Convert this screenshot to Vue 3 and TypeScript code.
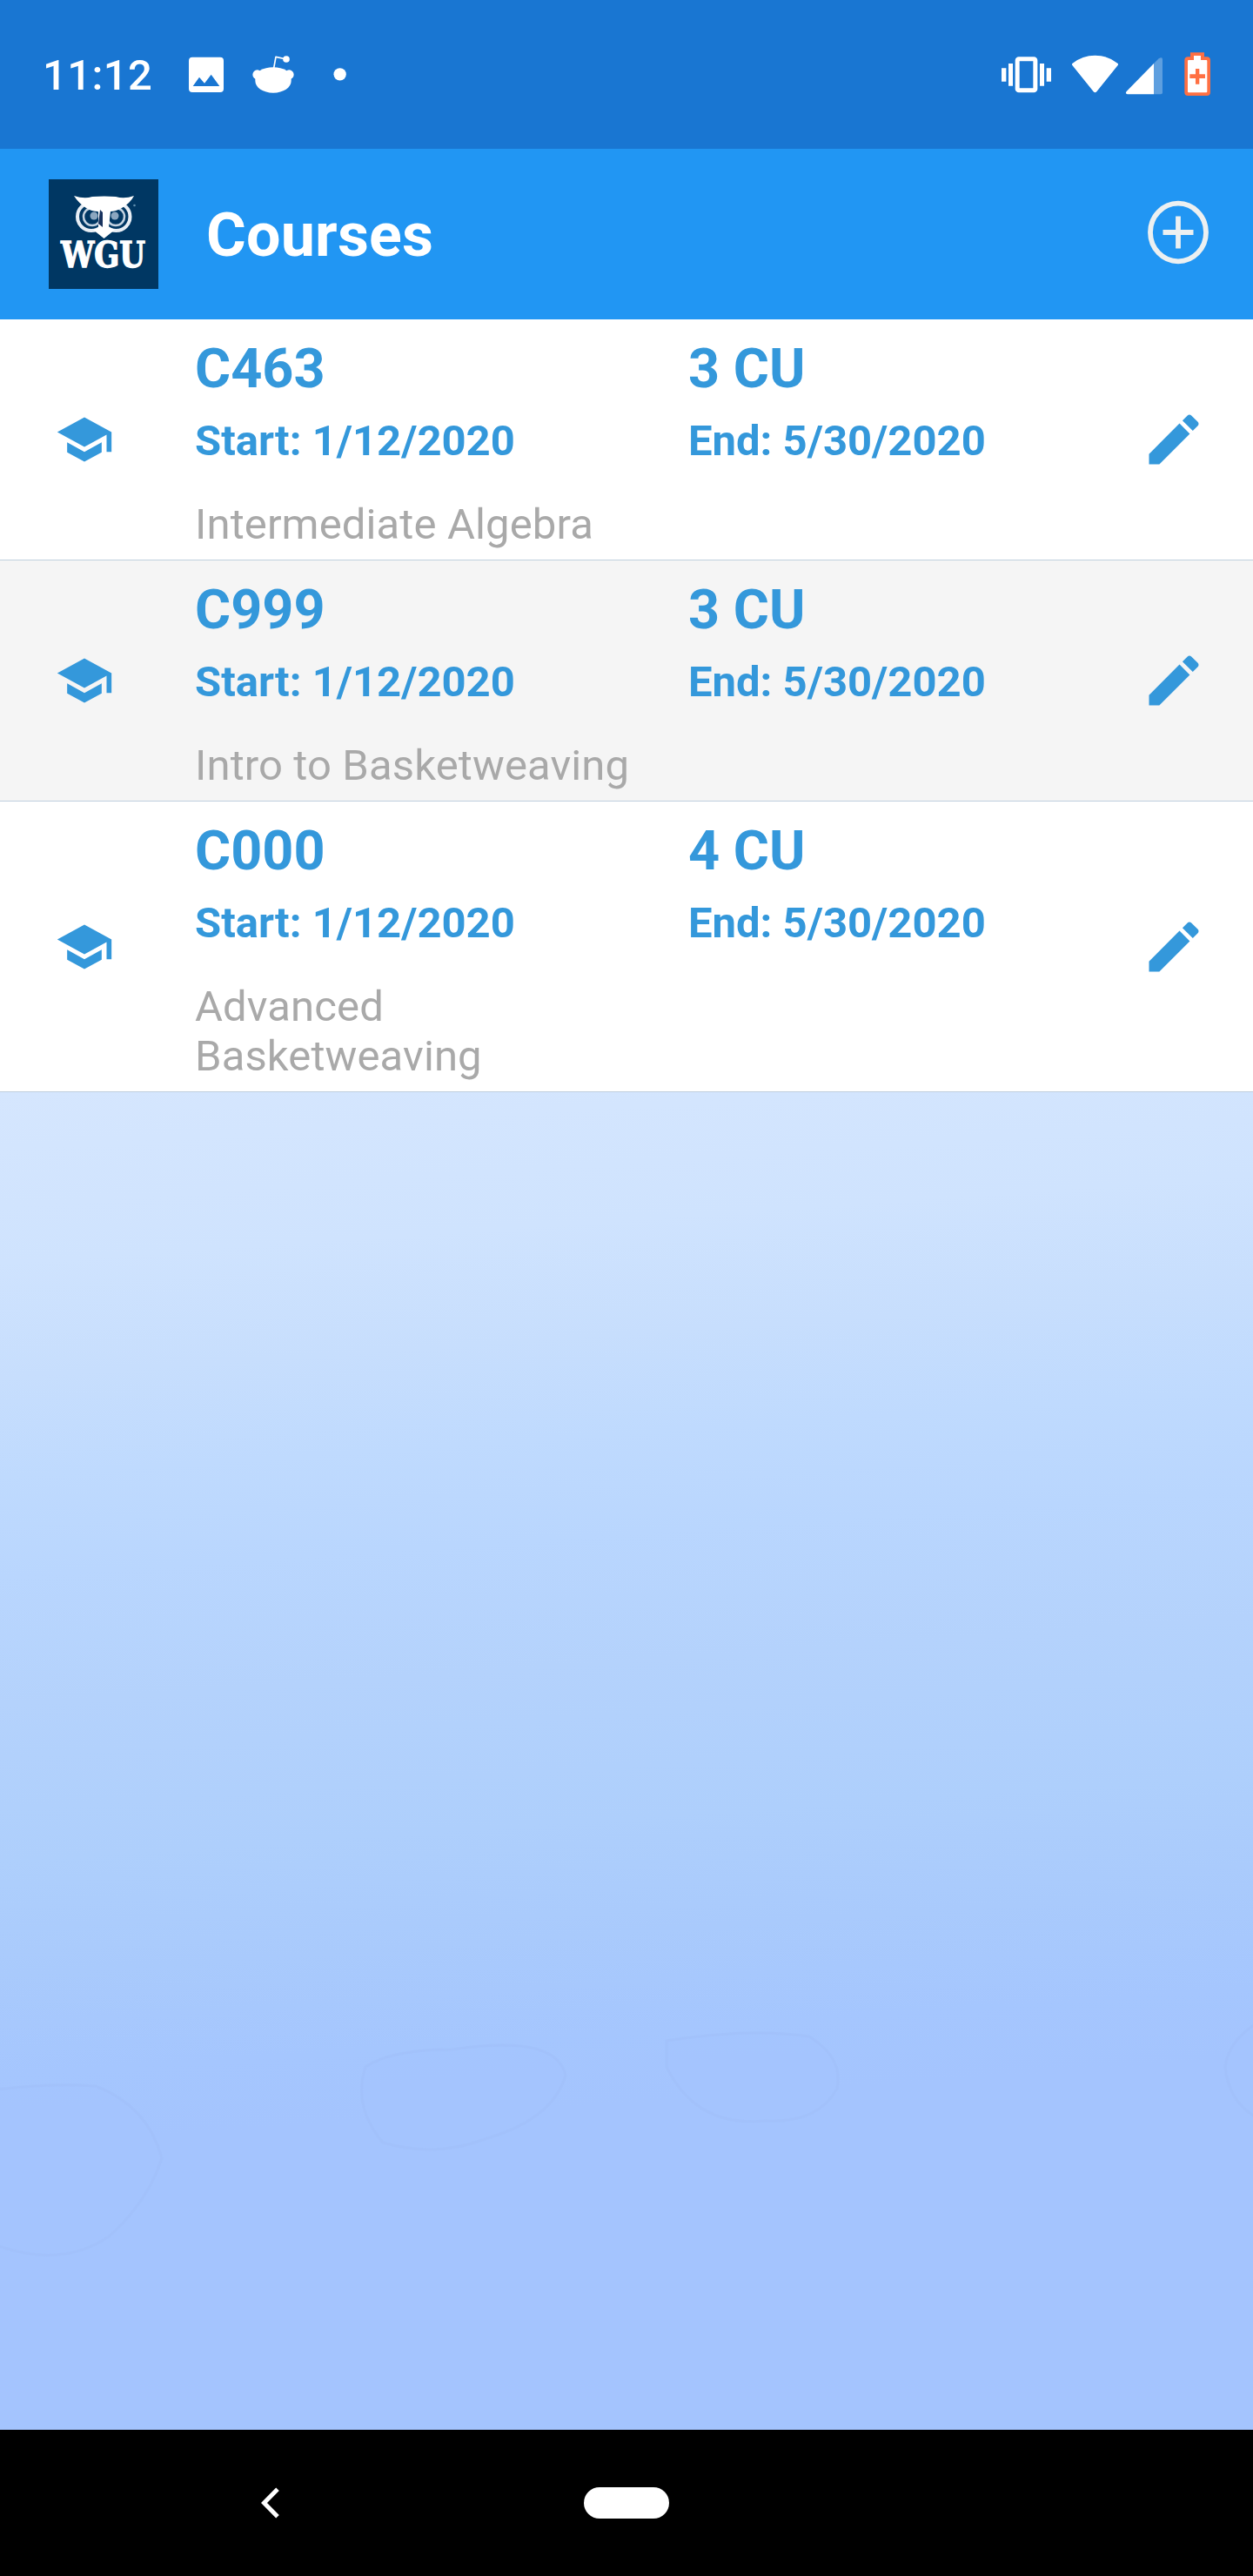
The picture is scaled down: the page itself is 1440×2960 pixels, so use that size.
<script setup lang="ts">
interface Course {
  code: string
  units: number
  start: string
  end: string
  title: string
}

const courses: Course[] = [
  { code: 'C463', units: 3, start: '1/12/2020', end: '5/30/2020', title: 'Intermediate Algebra' },
  { code: 'C999', units: 3, start: '1/12/2020', end: '5/30/2020', title: 'Intro to Basketweaving' },
  { code: 'C000', units: 4, start: '1/12/2020', end: '5/30/2020', title: 'Advanced Basketweaving' },
]
</script>

<template>
  <div class="screen">
    <div class="status-bar">
      <span class="clock">11:12</span>
      <svg class="notifications" viewBox="640 170 570 170" aria-hidden="true">
        <path
          fill-rule="evenodd"
          d="M664 196H760Q772 196 772 208V305Q772 317 760 317H664Q652 317 652 305V208Q652 196 664 196ZM666 296H758L729 256L706 286L688 265Z"
        />
        <circle cx="888" cy="256" r="16" />
        <circle cx="998" cy="256" r="16" />
        <path d="M881 268C881 246 908 231 943 231S1005 246 1005 268V278C1005 301 978 319 943 319S881 301 881 278Z" />
        <path class="antenna" d="M945 234L952 195L988 203" />
        <circle cx="988" cy="203" r="11.5" />
        <circle cx="1173" cy="255" r="21.5" />
      </svg>
      <svg class="system" viewBox="90 170 730 170" aria-hidden="true">
        <rect x="147.500" y="202.500" width="62" height="108" rx="5" class="phone" />
        <path d="M117 218h15v77h-15zM225 218h15v77h-15zM93 234h16v46h-16zM248 234h16v46h-16z" />
        <path d="M338 217Q372 190 415.500 190T493 217Q497 220 494 224L421 315Q415.500 321 410 315L337 224Q334 220 338 217Z" />
        <path d="M618 218L635 201Q648 193 648 204V318Q648 324 642 324H618Z" opacity="0.3" />
        <path d="M618 218V324H527Q518 321 524 314Z" />
        <path
          class="battery"
          d="M744 180H792V195H801Q813 195 813 207V317Q813 329 801 329H736Q724 329 724 317V207Q724 195 736 195H744Z"
        />
        <path d="M756 191H780V206H799Q802 206 802 209V315Q802 318 799 318H738Q735 318 735 315V209Q735 206 738 206H756Z" />
        <path class="battery" d="M762 236H775V255H795V269H775V289H762V269H742V255H762Z" />
      </svg>
    </div>

    <header class="app-bar">
      <svg class="logo" viewBox="0 0 126 126" role="img" aria-label="WGU">
        <rect width="126" height="126" fill="#003763" />
        <g class="owl">
          <circle cx="49" cy="43" r="16" class="ring" />
          <circle cx="77.500" cy="43" r="16" class="ring" />
          <circle cx="50" cy="43" r="10" class="ring thin" />
          <circle cx="77" cy="43" r="10" class="ring thin" />
          <circle cx="52" cy="42" r="4.500" class="iris" />
          <circle cx="76" cy="42" r="4.500" class="iris" />
          <path d="M29 19Q41 23 50 20Q64 19 77 20Q87 23 98 19Q94 27 84 33Q77 37 71 37L69 55L76 58L63.500 68L51 58L57 56L57 37Q49 37 43 33Q34 27 29 19Z" />
          <path class="shade" d="M59 35L62 38L62 55L57 51Z" />
          <circle cx="98.500" cy="30" r="1.300" fill="#5f8fae" />
        </g>
        <text x="14" y="101.200" textLength="97" lengthAdjust="spacingAndGlyphs">WGU</text>
      </svg>
      <h1>Courses</h1>
      <svg class="add" viewBox="0 0 72 76" aria-hidden="true">
        <ellipse cx="36" cy="38" rx="32" ry="33.300" />
        <path d="M36 19.500V56.500M18.500 38H53.500" />
      </svg>
    </header>

    <main class="list">
      <section v-for="course in courses" :key="course.code" class="row">
        <svg class="cap" viewBox="0 0 24 24" aria-hidden="true">
          <path d="M5 13.180v4L12 21l7-3.820v-4L12 17l-7-3.820zM12 3L1 9l11 6 9-4.910V17h2V9L12 3z" />
        </svg>
        <div class="details">
          <strong class="code">{{ course.code }}</strong>
          <strong class="date">Start: {{ course.start }}</strong>
          <span class="title">{{ course.title }}</span>
        </div>
        <div class="details secondary">
          <strong class="code">{{ course.units }} CU</strong>
          <strong class="date">End: {{ course.end }}</strong>
        </div>
        <svg class="edit" viewBox="0 0 24 24" aria-hidden="true">
          <path d="M3 17.250V21h3.750L17.810 9.940l-3.750-3.750L3 17.250zM20.710 7.040c.390-.390.390-1.020 0-1.410l-2.340-2.340c-.390-.390-1.020-.390-1.410 0l-1.830 1.830 3.750 3.750 1.830-1.830z" />
        </svg>
      </section>
    </main>

    <div class="backdrop">
      <svg viewBox="0 0 1440 1537" aria-hidden="true">
        <path d="M-4 1146Q60 1138 110 1142Q170 1165 186 1225Q170 1275 125 1315Q70 1352 -4 1325Z" />
        <path d="M420 1120Q450 1100 520 1100Q640 1082 650 1130Q635 1180 560 1202Q500 1225 440 1207Q405 1165 420 1120Z" />
        <path d="M766 1090Q860 1075 930 1085Q970 1110 962 1145Q940 1185 880 1182Q800 1190 766 1120Z" />
        <path d="M1444 1070Q1412 1090 1408 1120Q1412 1160 1444 1178Z" />
      </svg>
    </div>

    <nav class="nav-bar">
      <svg class="back" viewBox="0 0 22 36" aria-hidden="true">
        <path d="M19 2.200L3.500 18L19 33.800" />
      </svg>
      <div class="home"></div>
    </nav>
  </div>
</template>

<style>
body {
  margin: 0;
}
</style>

<style scoped>
.screen {
  display: flex;
  flex-direction: column;
  width: 1440px;
  height: 2960px;
  overflow: hidden;
  font-family: Roboto, sans-serif;
}

.status-bar {
  display: flex;
  flex: none;
  box-sizing: border-box;
  height: 171px;
  padding: 57px 47px 0 49px;
  background: #1976d2;
  color: #fff;
}

.status-bar svg {
  flex: none;
  height: 56.667px;
  fill: currentColor;
}

.clock {
  width: 164.333px;
  font-size: 49px;
  font-weight: 500;
  line-height: 60px;
  letter-spacing: 0.4px;
}

.notifications {
  width: 190px;
}

.antenna {
  fill: none;
  stroke: currentColor;
  stroke-width: 5;
  stroke-linejoin: round;
}

.system {
  width: 243.333px;
  margin-left: auto;
  margin-right: -0.333px;
}

.phone {
  fill: none;
  stroke: currentColor;
  stroke-width: 15;
}

.battery {
  fill: #ff7043;
}

.app-bar {
  display: flex;
  flex: none;
  align-items: center;
  box-sizing: border-box;
  height: 196px;
  padding: 0 50px 0 56px;
  background: #2196f3;
}

.logo {
  flex: none;
  width: 126px;
  height: 126px;
}

.logo text {
  fill: #fff;
  stroke: #fff;
  stroke-width: 1.3;
  font-family: "DejaVu Serif Condensed", "DejaVu Serif", serif;
  font-size: 41px;
  font-weight: 700;
}

.owl {
  fill: #fff;
}

.owl .ring {
  fill: #003763;
  stroke: #e8eef5;
  stroke-width: 4;
}

.owl .thin {
  stroke: #c5d4e2;
  stroke-width: 2.500;
}

.owl .iris {
  fill: #8ba6bf;
}

.owl .shade {
  fill: #17325e;
}

h1 {
  margin: 2px auto 0 55px;
  color: #fff;
  font-size: 70px;
  font-weight: 700;
  line-height: 82px;
  letter-spacing: 0.2px;
}

.add {
  width: 72px;
  height: 76px;
  margin-top: -4px;
  fill: none;
  stroke: #ecf0f1;
  stroke-width: 5.800;
}

.list {
  flex: none;
}

.row {
  display: flex;
  align-items: center;
  box-sizing: border-box;
  padding: 0 53px 0 63px;
  border-bottom: 1px solid #bfcfde;
  background: #fff;
  color: #3498db;
}

.row:nth-child(even) {
  background: #f5f5f5;
}

.cap {
  flex: none;
  width: 68px;
  height: 68px;
  fill: currentColor;
}

.details {
  display: flex;
  flex: none;
  flex-direction: column;
  align-self: stretch;
  width: 510px;
  margin-left: 93px;
  padding: 20px 0 12px;
}

.secondary {
  width: 440px;
  margin-left: 57px;
}

.code {
  font-size: 63px;
  line-height: 74px;
}

.date {
  margin-top: 17px;
  font-size: 49px;
  line-height: 58px;
}

.title {
  margin-top: 38px;
  color: #a9a9a9;
  font-size: 49px;
  line-height: 57px;
  letter-spacing: 0.12px;
}

.edit {
  flex: none;
  width: 76px;
  height: 76px;
  margin-left: auto;
  fill: currentColor;
}

.backdrop {
  flex: 1;
  min-height: 0;
  background: linear-gradient(
    176deg,
    #d5e6fe 0%,
    #cfe3fe 12%,
    #c7defd 20%,
    #bfdafe 27%,
    #b9d6fe 34%,
    #b4d2fc 43%,
    #aecffc 54%,
    #a9cafc 62%,
    #a5c6fe 69%,
    #a4c4fe 74%,
    #a4c4fe 100%
  );
}

.backdrop svg {
  display: block;
  width: 1440px;
  height: 1537px;
  fill: #a3c3fd;
  fill-opacity: 0.5;
  stroke: #a1c1fa;
  stroke-opacity: 0.7;
  stroke-width: 3;
}

.nav-bar {
  display: flex;
  flex: none;
  align-items: center;
  box-sizing: border-box;
  height: 168px;
  padding-left: 300px;
  background: #000;
}

.back {
  width: 22px;
  height: 36px;
  fill: none;
  stroke: #fff;
  stroke-width: 5;
}

.home {
  width: 98px;
  height: 36px;
  margin-left: 349px;
  border-radius: 18px;
  background: #fff;
}
</style>
